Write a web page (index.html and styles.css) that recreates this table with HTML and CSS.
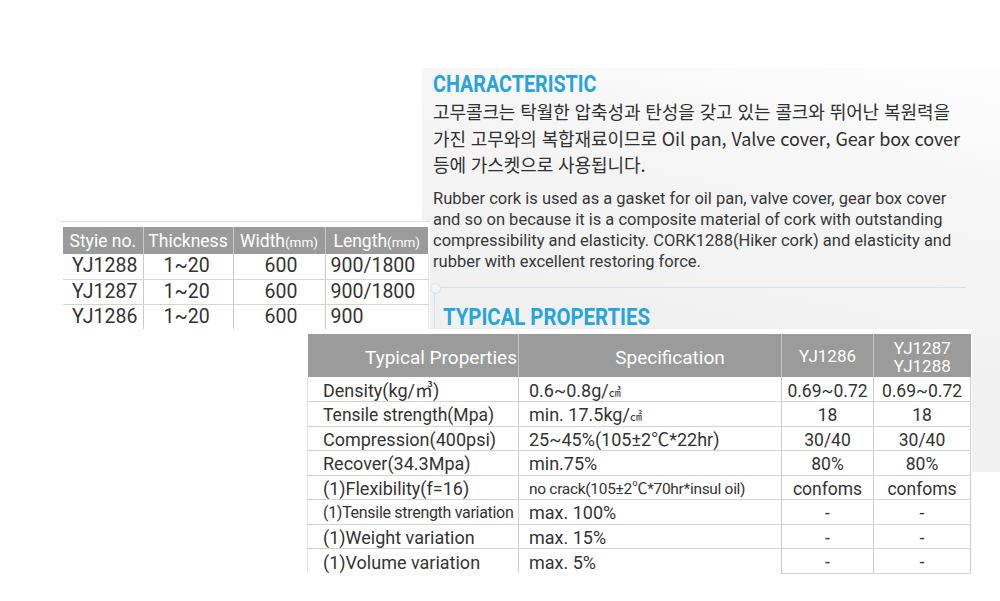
FILE: index.html
```html
<!DOCTYPE html>
<html lang="ko">
<head>
<meta charset="utf-8">
<title>Rubber cork</title>
<link rel="stylesheet" href="styles.css">
</head>
<body>
<div class="page">
  <section class="panel">
    <h2 class="title title-char">CHARACTERISTIC</h2>
    <p class="ko">고무콜크는 탁월한 압축성과 탄성을 갖고 있는 콜크와 뛰어난 복원력을<br>가진 고무와의 복합재료이므로 Oil pan, Valve cover, Gear box cover<br>등에 가스켓으로 사용됩니다.</p>
    <p class="en">Rubber cork is used as a gasket for oil pan, valve cover, gear box cover<br>and so on because it is a composite material of cork with outstanding<br>compressibility and elasticity. CORK1288(Hiker cork) and elasticity and<br>rubber with excellent restoring force.</p>
    <div class="divider"></div>
    <h2 class="title title-typ">TYPICAL PROPERTIES</h2>
  </section>

  <div class="sheet sheet-spec">
    <table class="spec">
      <colgroup><col class="s1"><col class="s2"><col class="s3"><col class="s4"></colgroup>
      <thead>
        <tr><th>Styie no.</th><th>Thickness</th><th>Width<small>(mm)</small></th><th>Length<small>(mm)</small></th></tr>
      </thead>
      <tbody>
        <tr><td class="c-no">YJ1288</td><td class="c-th">1~20</td><td class="c-w">600</td><td class="c-l">900/1800</td></tr>
        <tr><td class="c-no">YJ1287</td><td class="c-th">1~20</td><td class="c-w">600</td><td class="c-l">900/1800</td></tr>
        <tr><td class="c-no">YJ1286</td><td class="c-th">1~20</td><td class="c-w">600</td><td class="c-l">900</td></tr>
      </tbody>
    </table>
  </div>

  <div class="sheet sheet-props">
    <table class="props">
      <colgroup><col class="p1"><col class="p2"><col class="p3"><col class="p4"></colgroup>
      <thead>
        <tr><th class="h-prop">Typical Properties</th><th class="h-spec">Specification</th><th>YJ1286</th><th class="h-two">YJ1287<br>YJ1288</th></tr>
      </thead>
      <tbody>
        <tr><td class="k">Density(kg/㎥)</td><td class="v">0.6~0.8g/<span class="unit">㎤</span></td><td class="n">0.69~0.72</td><td class="n">0.69~0.72</td></tr>
        <tr><td class="k k-tight">Tensile strength(Mpa)</td><td class="v">min. 17.5kg/<span class="unit">㎠</span></td><td class="n">18</td><td class="n">18</td></tr>
        <tr><td class="k">Compression(400psi)</td><td class="v">25~45%(105±2℃*22hr)</td><td class="n">30/40</td><td class="n">30/40</td></tr>
        <tr><td class="k">Recover(34.3Mpa)</td><td class="v">min.75%</td><td class="n">80%</td><td class="n">80%</td></tr>
        <tr><td class="k">(1)Flexibility(f=16)</td><td class="v v-small">no crack(105±2℃*70hr*insul oil)</td><td class="n">confoms</td><td class="n">confoms</td></tr>
        <tr><td class="k k-small">(1)Tensile strength variation</td><td class="v">max. 100%</td><td class="n">-</td><td class="n">-</td></tr>
        <tr><td class="k">(1)Weight variation</td><td class="v">max. 15%</td><td class="n">-</td><td class="n">-</td></tr>
        <tr class="last"><td class="k">(1)Volume variation</td><td class="v">max. 5%</td><td class="n">-</td><td class="n">-</td></tr>
      </tbody>
    </table>
  </div>
</div>
</body>
</html>
```

FILE: styles.css
```css
* { box-sizing: border-box; }

html, body {
  margin: 0;
  padding: 0;
  background: #ffffff;
}

.page {
  position: relative;
  width: 1000px;
  height: 601px;
  overflow: hidden;
  padding-top: 68px;
  font-family: Roboto, "Noto Sans CJK KR", sans-serif;
  color: #333333;
}

/* grey characteristic panel */
.panel {
  margin-left: 422px;
  height: 404px;
  padding: 3px 0 0 11px;
  background: linear-gradient(192deg, #fefefe 0%, #f6f6f6 25%, #f1f1f1 60%, #efefef 100%);
}

.title {
  margin: 0;
  font-family: Roboto, sans-serif;
  font-weight: 700;
  color: #27a4dc;
  line-height: 26px;
  white-space: nowrap;
  transform: scaleX(0.84);
  transform-origin: 0 50%;
}

.title-char {
  font-size: 23.5px;
}

.title-typ {
  margin-top: 16px;
  margin-left: 10px;
  font-size: 24.2px;
}

.ko {
  margin: 1px 0 0;
  font-family: "Noto Sans CJK KR", sans-serif;
  font-size: 18px;
  line-height: 26.5px;
  color: #2f2f2f;
  white-space: nowrap;
  letter-spacing: -0.1px;
}

.en {
  margin: 10px 0 0;
  font-family: Roboto, sans-serif;
  font-size: 16.5px;
  line-height: 21.3px;
  color: #383838;
  white-space: nowrap;
}

.divider {
  position: relative;
  margin: 14px 0 0 3px;
  width: 530px;
  height: 1px;
  background: #cfe5f1;
}

.divider::before {
  content: "";
  position: absolute;
  left: -6px;
  top: -4px;
  width: 9px;
  height: 9px;
  border: 1px solid #cfe5f1;
  border-radius: 50%;
  background: #f4f4f4;
}

.divider::after {
  content: "";
  position: absolute;
  left: -2px;
  top: 5px;
  width: 1px;
  height: 40px;
  background: #cfe5f1;
}

/* white sheets laid over the panel */
.sheet {
  position: absolute;
  background: #ffffff;
}

.sheet-spec {
  left: 60px;
  top: 221px;
  width: 370px;
  height: 108px;
  padding: 5px 0 0 3px;
  border-top: 1px solid #e3e3e3;
}

.sheet-props {
  left: 301px;
  top: 329px;
  width: 671px;
  height: 250px;
  padding: 5px 0 0 6px;
}

table {
  border-collapse: collapse;
  table-layout: fixed;
}

/* size table */
.spec { width: 365px; }
.spec .s1 { width: 80px; }
.spec .s2 { width: 90px; }
.spec .s3 { width: 92px; }
.spec .s4 { width: 103px; }

.spec th {
  height: 27px;
  padding: 0;
  background: #9b9b9b;
  color: #ffffff;
  font-weight: 400;
  font-size: 17.5px;
  text-align: center;
  white-space: nowrap;
  border-right: 1px solid #c9c9c9;
}

.spec th:last-child { border-right: 0; }

.spec th small { font-size: 13.5px; }

.spec td {
  height: 25px;
  padding: 0;
  font-size: 19.5px;
  line-height: 22px;
  color: #333333;
  white-space: nowrap;
  border-right: 1px solid #c9c9c9;
  border-bottom: 1px solid #d5d5d5;
}

.spec tr:last-child td { border-bottom: 0; }
.spec td:last-child { border-right: 1px solid #e6e6e6; }

.spec .c-no { padding-left: 9px; }
.spec .c-th { padding-left: 20px; }
.spec .c-w { text-align: center; padding-left: 4px; }
.spec .c-l { padding-left: 5px; }

/* properties table */
.props { width: 663px; }
.props .p1 { width: 211px; }
.props .p2 { width: 263px; }
.props .p3 { width: 92px; }
.props .p4 { width: 97px; }

.props th {
  height: 43px;
  padding: 0;
  background: #9b9b9b;
  color: #ffffff;
  font-weight: 400;
  font-size: 17px;
  text-align: center;
  white-space: nowrap;
  border-right: 1px solid #c4c4c4;
}

.props th:last-child { border-right: 0; }

.props .h-prop {
  text-align: right;
  padding-right: 1px;
  font-size: 19px;
  padding-top: 3px;
}

.props .h-spec {
  font-size: 19px;
  padding-top: 3px;
  padding-left: 40px;
}

.props .h-two {
  line-height: 18px;
  padding-top: 2px;
}

.props td {
  height: 24.5px;
  padding: 3px 0 0;
  font-size: 18px;
  line-height: 20px;
  color: #333333;
  white-space: nowrap;
  overflow: hidden;
  border-right: 1px solid #cdcdcd;
  border-bottom: 1px solid #d3d3d3;
}

.props td:first-child { border-left: 1px solid #e2e2e2; }
.props td:last-child { border-right: 1px solid #cdcdcd; }

.props .last td { border-bottom: 0; }
.props .last td.n { border-bottom: 1px solid #d3d3d3; }

.props .k { padding-left: 15px; }
.props .k-tight { font-size: 17.5px; }
.props .k-small { font-size: 16px; letter-spacing: -0.3px; }
.props .v { padding-left: 10px; }
.props .v-small { font-size: 15.5px; letter-spacing: -0.3px; }
.props .n { text-align: center; font-size: 17.5px; }

.unit { font-size: 12px; line-height: 1; }
```
